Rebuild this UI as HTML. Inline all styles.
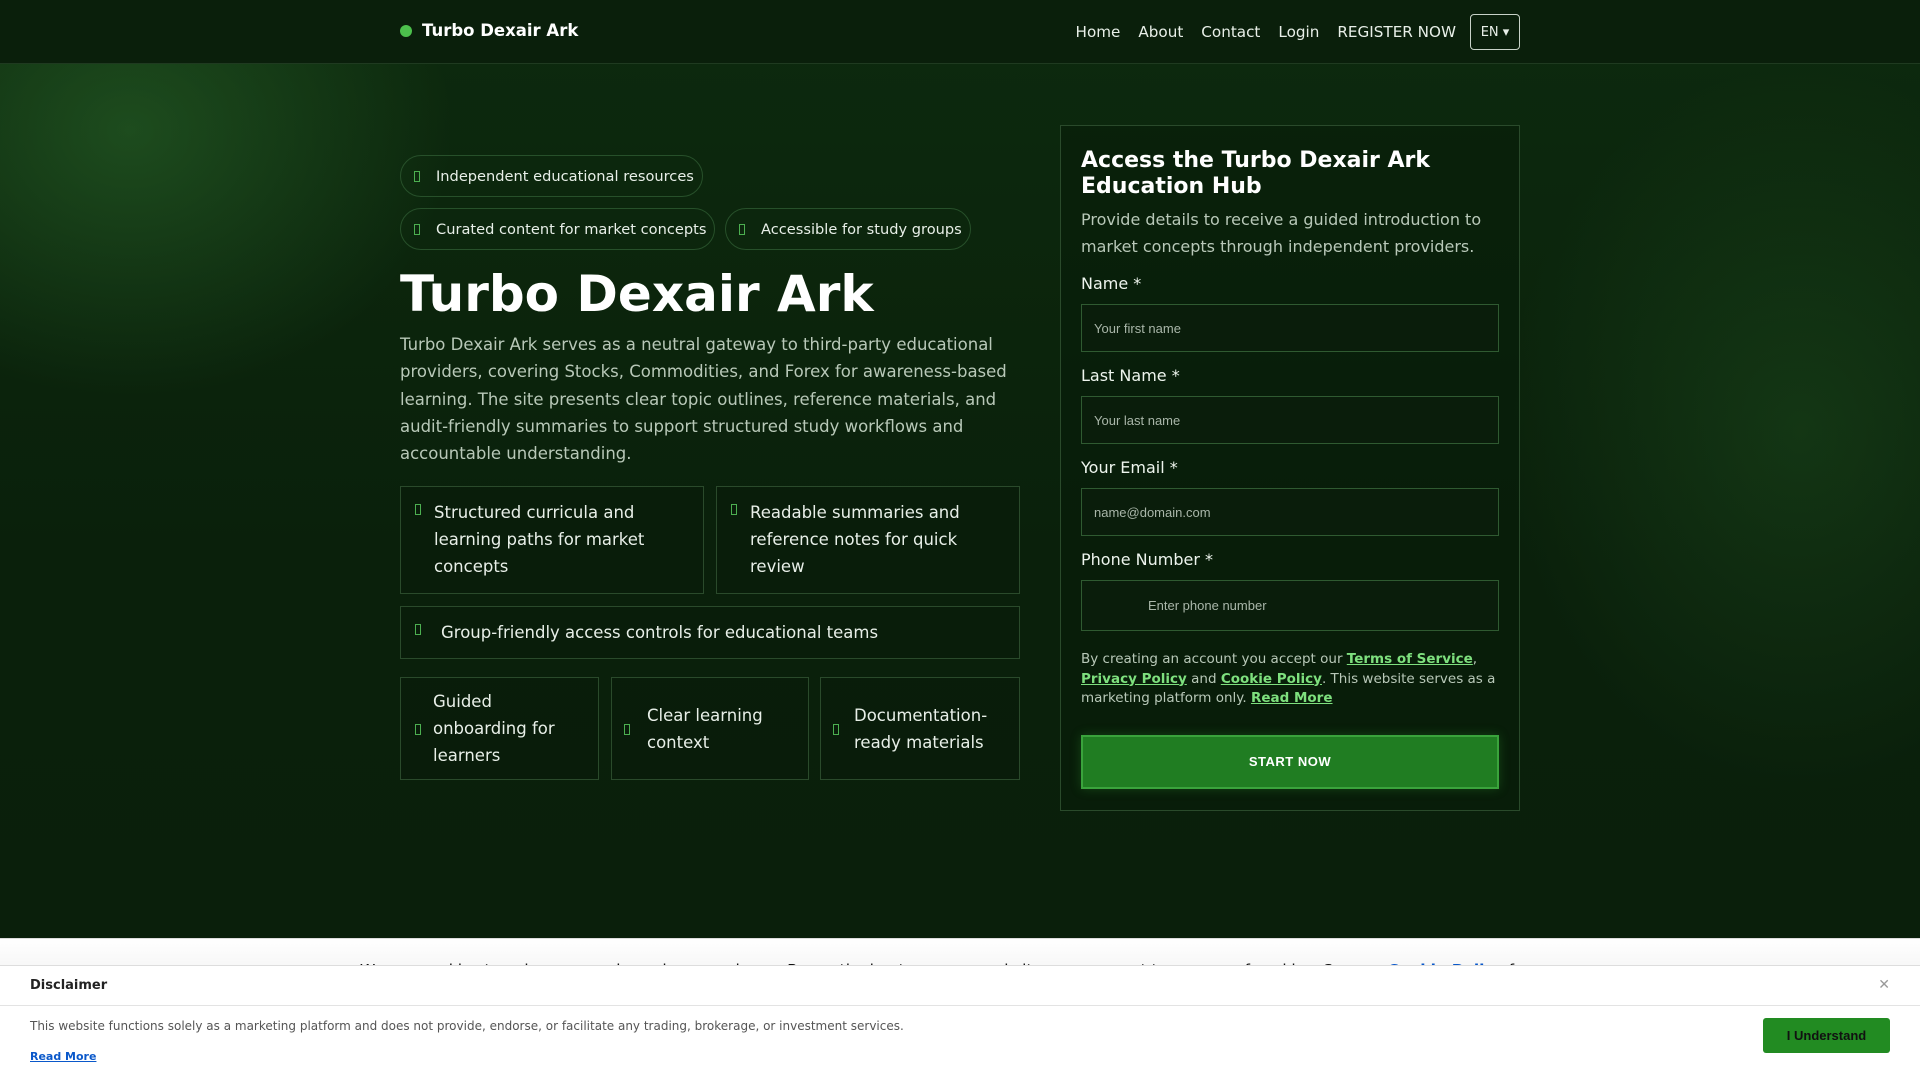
<!DOCTYPE html>
<html><head><meta charset="utf-8"><style>
*{box-sizing:border-box;margin:0;padding:0}
body{width:1920px;height:1080px;overflow:hidden;font-family:"DejaVu Sans","Liberation Sans",sans-serif;background:#0a1f0b;color:#fff;position:relative}
.hero{position:absolute;left:0;top:0;width:1920px;height:938px;background:
radial-gradient(ellipse 460px 380px at 130px 130px,rgba(50,120,50,.45),transparent 70%),
radial-gradient(ellipse 420px 520px at 1800px 430px,rgba(40,100,40,.3),transparent 70%),
linear-gradient(180deg,#0d2a0e 0%,#0a200b 60%,#0a1f0b 100%)}
nav{position:absolute;top:0;left:0;width:1920px;height:64px;background:#0a1f0b;border-bottom:1px solid #1f3a20}
.logo{position:absolute;left:400px;top:21px;font-size:16.5px;font-weight:bold;display:flex;align-items:center}
.logo i{width:12px;height:12px;border-radius:50%;background:#4cc04c;margin-right:10px;display:inline-block}
.links{position:absolute;right:400px;top:14px;display:flex;align-items:center;font-size:15.2px;color:#e8efe8}
.links span{margin-left:18px}
.en{margin-left:14px;border:1px solid #c8d2c8;border-radius:4px;width:50px;height:36px;font-size:13px;display:flex;align-items:center;justify-content:center}
.tofu{display:inline-block;width:6px;height:11px;border:1px solid #4caf50;margin-right:16px;vertical-align:middle}
.pill{position:absolute;height:42px;border:1px solid #27502a;border-radius:21px;font-size:14.6px;display:flex;align-items:center;padding-left:13px;color:#e8efe8}
h1{position:absolute;left:400px;top:262px;font-size:50px;font-weight:bold;line-height:64px}
.desc{position:absolute;left:400px;top:331px;width:620px;font-size:16.5px;line-height:27.3px;color:#b8c8b8}
.box{position:absolute;border:1px solid #2a4a2b;background:rgba(8,25,9,.5);font-size:16.5px;line-height:27px;color:#e8efe8}
.box .tofu{position:absolute;left:14px}
.card{position:absolute;left:1060px;top:125px;width:460px;height:686px;border:1px solid #2a4a2b;background:rgba(8,28,9,.55);padding:21px 20px 20px}
.card h2{font-size:22px;line-height:26px;font-weight:bold;margin-top:1px}
.card p.sub{font-size:16px;line-height:27px;color:#b8c8b8;margin-top:6px}
label{display:block;font-size:16px;margin-top:14px;color:#eef5ee}
.inp{margin-top:11px;height:48px;border:1px solid #2f5a31;background:#0a1d0b;font-family:"Liberation Sans",sans-serif;font-size:13px;color:#a9b6a9;padding-left:12px;display:flex;align-items:center}
.terms{font-size:13.5px;line-height:19.5px;color:#b8c8b8;margin-top:19px}
.terms b{color:#7ee07e;text-decoration:underline}
.btn{margin-top:26px;height:54px;background:#207d22;border:2px solid #3aa33c;box-shadow:0 0 10px rgba(50,160,50,.3);display:flex;align-items:center;justify-content:center;font-family:"Liberation Sans",sans-serif;font-weight:bold;font-size:13px;letter-spacing:.5px}
.cookie{position:absolute;left:0;top:938px;width:1920px;height:60px;background:linear-gradient(#fff,#eee);border-top:1px solid #ddd;color:#111;font-size:15.5px}
.cookie div{position:absolute;left:360px;top:22px;white-space:nowrap}
.disc{position:absolute;left:0;top:965px;width:1920px;height:115px;background:#fff;border-top:1px solid #ddd;color:#222;font-family:"DejaVu Sans",sans-serif}
.disc .h{height:40px;border-bottom:1px solid #e3e3e3;font-weight:bold;font-size:13px;padding:12px 30px}
.disc .x{position:absolute;right:30px;top:11px;color:#999;font-size:14px}
.disc .t{position:absolute;left:30px;top:53px;font-size:12px;color:#555}
.disc a{position:absolute;left:30px;top:84px;font-size:11px;color:#0a58ca;font-weight:bold;text-decoration:underline}
.disc .ok{position:absolute;left:1763px;top:52px;width:127px;height:35px;background:#228b22;border-radius:3px;color:#111;font-size:13px;font-weight:bold;font-family:"Liberation Sans",sans-serif;display:flex;align-items:center;justify-content:center}
</style></head><body>
<div class="hero"></div>
<nav><div class="logo"><i></i>Turbo Dexair Ark</div>
<div class="links"><span>Home</span><span>About</span><span>Contact</span><span>Login</span><span>REGISTER NOW</span><div class="en">EN ▾</div></div></nav>
<div class="pill" style="left:400px;top:155px;width:303px"><span class="tofu"></span>Independent educational resources</div>
<div class="pill" style="left:400px;top:208px;width:315px"><span class="tofu"></span>Curated content for market concepts</div>
<div class="pill" style="left:725px;top:208px;width:246px"><span class="tofu"></span>Accessible for study groups</div>
<h1>Turbo Dexair Ark</h1>
<div class="desc">Turbo Dexair Ark serves as a neutral gateway to third-party educational providers, covering Stocks, Commodities, and Forex for awareness-based learning. The site presents clear topic outlines, reference materials, and audit-friendly summaries to support structured study workflows and accountable understanding.</div>
<div class="box" style="left:400px;top:486px;width:304px;height:108px;padding:12px 10px 0 33px"><span class="tofu" style="top:17px"></span>Structured curricula and learning paths for market concepts</div>
<div class="box" style="left:716px;top:486px;width:304px;height:108px;padding:12px 10px 0 33px"><span class="tofu" style="top:17px"></span>Readable summaries and reference notes for quick review</div>
<div class="box" style="left:400px;top:606px;width:620px;height:53px;padding:12px 10px 0 40px"><span class="tofu" style="top:17px"></span>Group-friendly access controls for educational teams</div>
<div class="box" style="left:400px;top:677px;width:199px;height:103px;padding:10px 10px 0 32px"><span class="tofu" style="top:46px"></span>Guided onboarding for learners</div>
<div class="box" style="left:611px;top:677px;width:198px;height:103px;padding:24px 10px 0 35px"><span class="tofu" style="top:46px;left:12px"></span>Clear learning context</div>
<div class="box" style="left:820px;top:677px;width:200px;height:103px;padding:24px 10px 0 33px"><span class="tofu" style="top:46px;left:12px"></span>Documentation-ready materials</div>
<div class="card">
<h2>Access the Turbo Dexair Ark Education Hub</h2>
<p class="sub">Provide details to receive a guided introduction to market concepts through independent providers.</p>
<label>Name *</label><div class="inp">Your first name</div>
<label>Last Name *</label><div class="inp">Your last name</div>
<label>Your Email *</label><div class="inp">name@domain.com</div>
<label>Phone Number *</label><div class="inp" style="height:51px;padding-left:66px">Enter phone number</div>
<div class="terms">By creating an account you accept our <b>Terms of Service</b>, <b>Privacy Policy</b> and <b>Cookie Policy</b>. This website serves as a marketing platform only. <b>Read More</b></div>
<div class="btn">START NOW</div>
</div>
<div class="cookie"><div>We use cookies to enhance your browsing experience. By continuing to use our website, you consent to our use of cookies. See our <b style="color:#0a58ca">Cookie Policy</b> for</div></div>
<div class="disc"><div class="h">Disclaimer</div><div class="x">✕</div>
<div class="t">This website functions solely as a marketing platform and does not provide, endorse, or facilitate any trading, brokerage, or investment services.</div>
<a>Read More</a><div class="ok">I Understand</div></div>
</body></html>
